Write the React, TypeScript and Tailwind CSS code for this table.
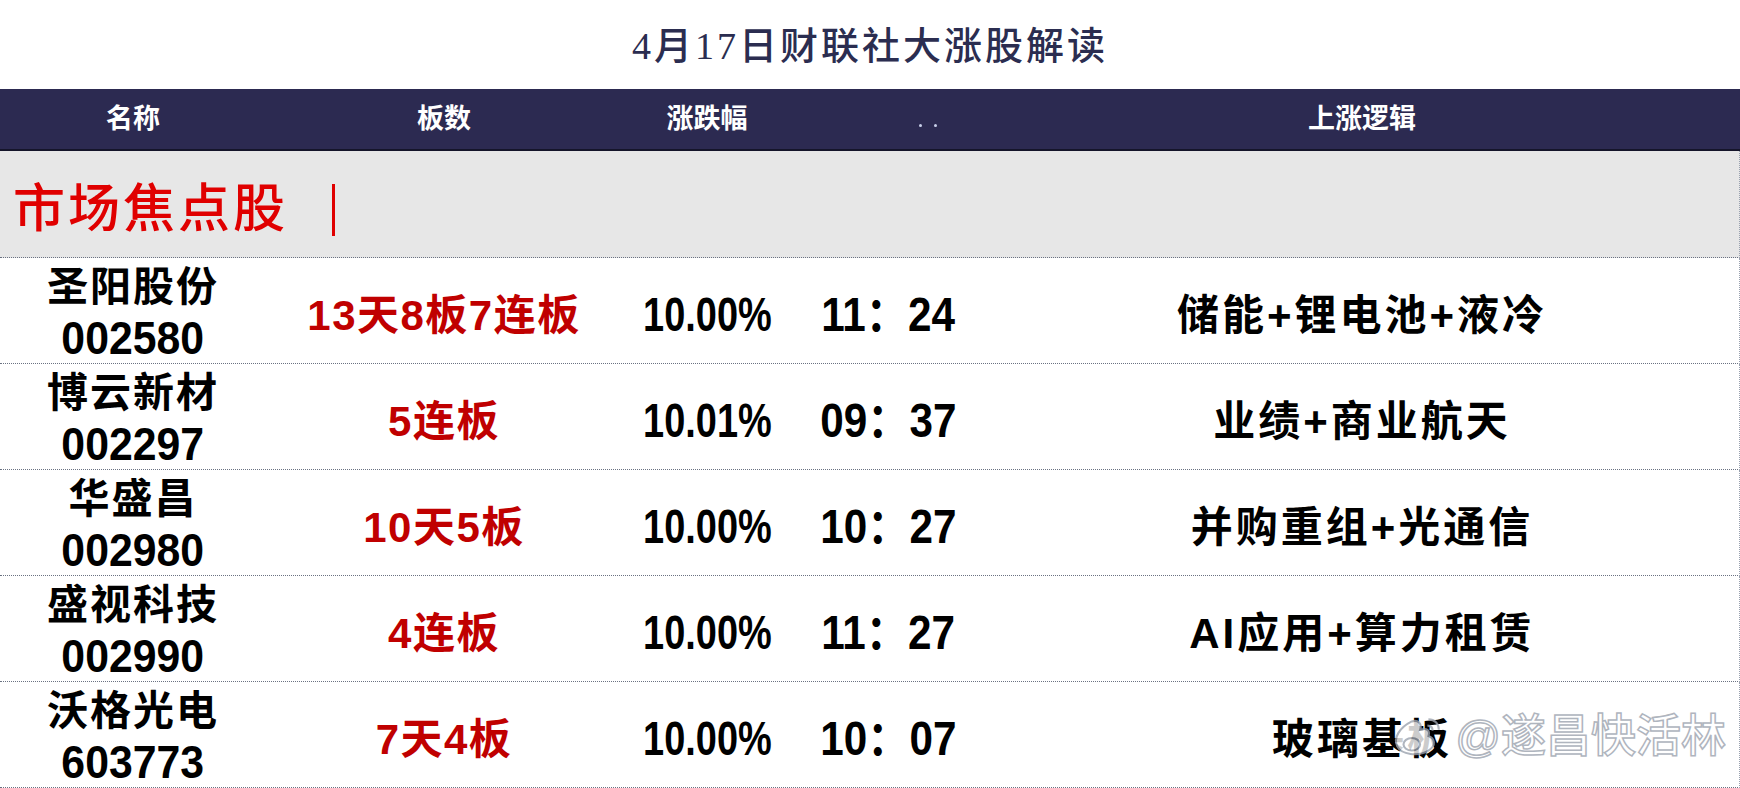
const rows = [
  { name: "圣阳股份", code: "002580", board: "13天8板7连板", pct: "10.00%", time: "11：24", logic: "储能+锂电池+液冷" },
  { name: "博云新材", code: "002297", board: "5连板", pct: "10.01%", time: "09：37", logic: "业绩+商业航天" },
  { name: "华盛昌", code: "002980", board: "10天5板", pct: "10.00%", time: "10：27", logic: "并购重组+光通信" },
  { name: "盛视科技", code: "002990", board: "4连板", pct: "10.00%", time: "11：27", logic: "AI应用+算力租赁" },
  { name: "沃格光电", code: "603773", board: "7天4板", pct: "10.00%", time: "10：07", logic: "玻璃基板" },
];

const cols = "grid grid-cols-[266px_356px_170px_192px_756px]";
const sans = "font-['Liberation_Sans','Noto_Sans_CJK_SC',sans-serif]";

export default function App() {
  return (
    <div className="relative w-[1740px] h-[788px] overflow-hidden bg-white">
      <div className="h-[89px] flex items-center justify-center">
        <h1 className="text-[38px] tracking-[3px] font-medium text-[#2b2d50] font-['Liberation_Serif','Noto_Sans_CJK_SC',serif] pt-1">
          4月17日财联社大涨股解读
        </h1>
      </div>

      <div className={`${cols} h-[62px] bg-[#2c2a51] border-b-2 border-[#15152a] text-white text-[27px] font-bold ${sans}`}>
        <div className="flex items-center justify-center">名称</div>
        <div className="flex items-center justify-center">板数</div>
        <div className="flex items-center justify-center">涨跌幅</div>
        <div className="flex items-center justify-center pl-20 pt-3 gap-3">
          <span className="w-[3px] h-[3px] rounded-full bg-[#c8d0ea]" />
          <span className="w-[3px] h-[3px] rounded-full bg-[#c8d0ea]" />
        </div>
        <div className="flex items-center justify-center">上涨逻辑</div>
      </div>

      <div className="h-[107px] bg-[#e7e7e7] border-b border-dotted border-gray-500 border-r border-r-gray-400 flex items-center pl-[13px] pt-3 text-[#e00000] font-['Liberation_Serif','Noto_Sans_CJK_SC',serif]">
        <span className="text-[52px] tracking-[3px] font-medium">市场焦点股</span>
        <span className="ml-[44px] w-[3px] h-[52px] bg-[#e00000]" />
      </div>

      {rows.map((r) => (
        <div
          key={r.code}
          className={`${cols} h-[106px] border-b border-dotted border-gray-500 border-r border-r-gray-400 text-black ${sans}`}
        >
          <div className="flex flex-col items-center justify-center leading-[51px] pt-1">
            <span className="text-[41px] font-bold tracking-[2px]">{r.name}</span>
            <span className="text-[46px] font-bold scale-x-[0.93]">{r.code}</span>
          </div>
          <div className="flex items-center justify-center pt-2 text-[42px] font-bold tracking-[1.5px] text-[#c00000]">
            {r.board}
          </div>
          <div className="flex items-center justify-center pt-2">
            <span className="text-[48px] font-bold scale-x-[0.79]">{r.pct}</span>
          </div>
          <div className="flex items-center justify-center pt-2">
            <span className="text-[48px] font-bold scale-x-[0.88]">{r.time}</span>
          </div>
          <div className="flex items-center justify-center pt-2 text-[42px] font-bold tracking-[3px]">
            {r.logic}
          </div>
        </div>
      ))}

      <div className="absolute right-[14px] bottom-[18px] flex items-center gap-3 opacity-80">
        <svg width="52" height="46" viewBox="0 0 50 44" fill="none" stroke="#9ca3af" strokeWidth="2">
          <path d="M20 8 C8 14 2 24 6 32 C10 40 26 42 36 36 C44 31 42 24 36 22 C38 16 34 14 28 16 C30 10 26 6 20 8 Z" fill="white" />
          <ellipse cx="20" cy="30" rx="8" ry="6" />
          <path d="M36 6 C42 6 46 10 46 16" />
          <path d="M35 12 C38 12 40 14 40 17" />
        </svg>
        <span className={`text-[45px] text-white font-medium [-webkit-text-stroke:1.5px_#9ca3af] ${sans}`}>
          @遂昌快活林
        </span>
      </div>
    </div>
  );
}
